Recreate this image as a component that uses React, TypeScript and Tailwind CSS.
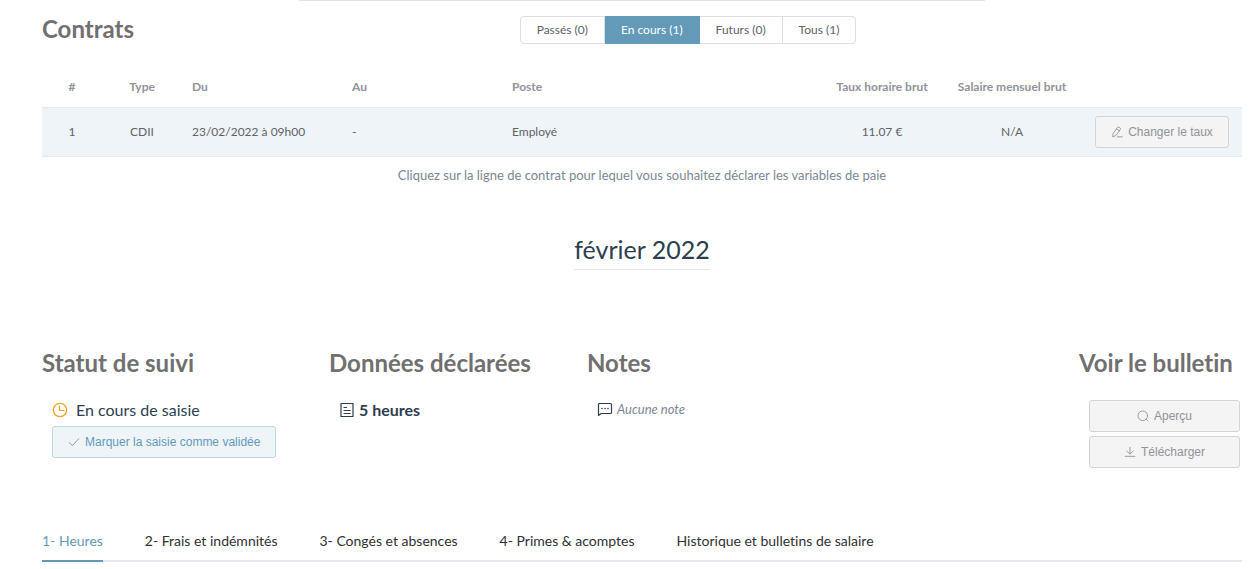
import React, { useState } from "react";
import clsx from "clsx";

type IconProps = { className?: string };

function Icon({ className, children }: IconProps & { children: React.ReactNode }) {
  return (
    <svg
      viewBox="0 0 16 16"
      className={clsx("shrink-0", className)}
      fill="none"
      stroke="currentColor"
      strokeLinecap="round"
      strokeLinejoin="round"
      aria-hidden="true"
    >
      {children}
    </svg>
  );
}

const EditIcon = ({ className }: IconProps) => (
  <Icon className={className}>
    <path
      strokeWidth="1.2"
      d="M3 9.8 8.4 2a1.7 1.7 0 0 1 2.3-.4l1.2.8a1.7 1.7 0 0 1 .4 2.3L6.8 12.5 2.8 14.4ZM7.2 3.8l3.9 2.7"
    />
    <path strokeWidth="1.2" d="M8.5 14.5h6.5" />
  </Icon>
);

const CheckIcon = ({ className }: IconProps) => (
  <Icon className={className}>
    <path strokeWidth="1.2" d="m1.8 8.8 4 4L14.4 3.6" />
  </Icon>
);

const ClockIcon = ({ className }: IconProps) => (
  <Icon className={className}>
    <circle cx="8" cy="8" r="6.7" strokeWidth="1.2" />
    <path strokeWidth="1.2" d="M7.5 4v4.5H12" />
  </Icon>
);

const DocumentIcon = ({ className }: IconProps) => (
  <Icon className={className}>
    <path strokeWidth="1.2" d="M2 1.5h12v13H2ZM5 5.5h2.5M5 8.5h6M5 11.5h6" />
  </Icon>
);

const ChatIcon = ({ className }: IconProps) => (
  <Icon className={className}>
    <path strokeWidth="1.2" d="M2.5 2.5h11a1 1 0 0 1 1 1v8a1 1 0 0 1-1 1H4.2l-2.7 2v-11a1 1 0 0 1 1-1Z" />
    <path strokeWidth="1.6" d="M5 7.5h.01M8 7.5h.01M11 7.5h.01" />
  </Icon>
);

const SearchIcon = ({ className }: IconProps) => (
  <Icon className={className}>
    <circle cx="7.7" cy="7.7" r="6.4" strokeWidth="1.2" />
    <path strokeWidth="1.2" d="m12.4 12.4 2.3 2.3" />
  </Icon>
);

const DownloadIcon = ({ className }: IconProps) => (
  <Icon className={className}>
    <path strokeWidth="1.2" d="M8 1.8v8.7M3.8 6.8 8 10.8l4.2-4M1.5 13.8h13" />
  </Icon>
);

const filters = ["Passés (0)", "En cours (1)", "Futurs (0)", "Tous (1)"];

const tabs = [
  "1- Heures",
  "2- Frais et indémnités",
  "3- Congés et absences",
  "4- Primes & acomptes",
  "Historique et bulletins de salaire",
];

function Title({ children }: { children: React.ReactNode }) {
  return <h2 className="text-2xl leading-[26px] font-bold whitespace-nowrap text-[#707070]">{children}</h2>;
}

function ActionButton({
  icon,
  tone = "muted",
  className,
  children,
}: {
  icon: React.ReactNode;
  tone?: "muted" | "primary";
  className?: string;
  children: React.ReactNode;
}) {
  return (
    <button
      type="button"
      className={clsx(
        "inline-flex h-8 items-center justify-center gap-[5px] rounded-[3px] border px-[15px] font-['Liberation_Sans',sans-serif] text-xs whitespace-nowrap",
        tone === "muted" && "border-[#d3d4d6] bg-[#f4f4f4] text-[#909399]",
        tone === "primary" && "border-[#bcd6e3] bg-[#eff4f9] text-[#639ab7]",
        className
      )}
    >
      {icon}
      {children}
    </button>
  );
}

function Contracts() {
  const [filter, setFilter] = useState(1);

  return (
    <section>
      <div className="flex items-start">
        <Title>Contrats</Title>
        <div className="flex flex-1 justify-center">
          <div className="flex" role="group" aria-label="Filtrer les contrats">
            {filters.map((label, i) => (
              <button
                key={label}
                type="button"
                aria-pressed={filter === i}
                onClick={() => setFilter(i)}
                className={clsx(
                  "h-7 border-y border-r px-4 text-xs first:rounded-l first:border-l last:rounded-r",
                  filter === i ? "border-[#639ab7] bg-[#639ab7] text-white" : "border-[#dcdfe6] text-[#606266]"
                )}
              >
                {label}
              </button>
            ))}
          </div>
        </div>
      </div>

      <table className="mt-[23px] w-full table-fixed text-left text-xs">
        <thead className="text-[#909399]">
          <tr className="h-10">
            <th className="w-[60px] text-center">#</th>
            <th className="w-20 text-center">Type</th>
            <th className="w-40 px-2.5">Du</th>
            <th className="w-40 px-2.5">Au</th>
            <th className="px-2.5">Poste</th>
            <th className="w-[120px] text-center">Taux horaire brut</th>
            <th className="w-[140px] text-center">Salaire mensuel brut</th>
            <th className="w-40" aria-label="Actions"></th>
          </tr>
        </thead>
        <tbody className="text-[#606266]">
          <tr className="h-[49px] cursor-pointer border-y border-[#e4eaf1] bg-[#eff4f9]">
            <td className="text-center">1</td>
            <td className="text-center">CDII</td>
            <td className="px-2.5">23/02/2022 à 09h00</td>
            <td className="px-2.5">-</td>
            <td className="px-2.5">Employé</td>
            <td className="text-center">11.07 €</td>
            <td className="text-center">N/A</td>
            <td className="text-center">
              <ActionButton icon={<EditIcon className="size-3" />}>Changer le taux</ActionButton>
            </td>
          </tr>
        </tbody>
      </table>
      <p className="mt-2 text-center text-[13px] leading-5 text-[#7a8794]">
        Cliquez sur la ligne de contrat pour lequel vous souhaitez déclarer les variables de paie
      </p>
    </section>
  );
}

function Summary() {
  return (
    <section className="mt-20 grid grid-cols-[287px_258px_1fr_163px] text-[#2c3e50]">
      <div>
        <Title>Statut de suivi</Title>
        <div className="mt-[22px] pl-2.5">
          <p className="flex items-center gap-2 text-base leading-6">
            <ClockIcon className="size-4 text-[#f0a020]" />
            En cours de saisie
          </p>
          <ActionButton tone="primary" className="mt-1" icon={<CheckIcon className="size-3" />}>
            Marquer la saisie comme validée
          </ActionButton>
        </div>
      </div>
      <div>
        <Title>Données déclarées</Title>
        <p className="mt-[22px] flex items-center gap-1 pl-2.5 text-base leading-6 font-bold">
          <DocumentIcon className="size-4" />5 heures
        </p>
      </div>
      <div>
        <Title>Notes</Title>
        <p className="mt-[22px] flex items-center gap-1 pl-2.5 text-[13px] leading-[22px] text-[#7a8794] italic">
          <ChatIcon className="size-4 text-[#2c3e50]" />
          Aucune note
        </p>
      </div>
      <div>
        <Title>Voir le bulletin</Title>
        <div className="mt-6 mr-0.5 flex flex-col gap-1 pl-2.5">
          <ActionButton icon={<SearchIcon className="size-3" />}>Aperçu</ActionButton>
          <ActionButton icon={<DownloadIcon className="size-3" />}>Télécharger</ActionButton>
        </div>
      </div>
    </section>
  );
}

function Tabs() {
  const [active, setActive] = useState(0);

  return (
    <div role="tablist" className="mt-[54px] flex gap-[42px] border-b-2 border-[#e4e7ed] text-sm">
      {tabs.map((label, i) => (
        <button
          key={label}
          type="button"
          role="tab"
          aria-selected={active === i}
          onClick={() => setActive(i)}
          className={clsx(
            "-mb-0.5 h-10 border-b-2 whitespace-nowrap",
            active === i ? "border-[#639ab7] text-[#639ab7]" : "border-transparent text-[#303133]"
          )}
        >
          {label}
        </button>
      ))}
    </div>
  );
}

export default function App() {
  return (
    <main className="bg-white pr-2.5 pl-[42px] font-[Lato,sans-serif] [font-variant-ligatures:none]">
      <div className="mx-auto mb-[15px] w-4/7 border-t border-[#e4e4e4]" />
      <Contracts />
      <div className="mt-12 text-center">
        <h1 className="inline-block border-b border-[#e4e7ed] pb-1 text-[25px] leading-8 text-[#2c3e50]">
          février 2022
        </h1>
      </div>
      <Summary />
      <Tabs />
    </main>
  );
}
